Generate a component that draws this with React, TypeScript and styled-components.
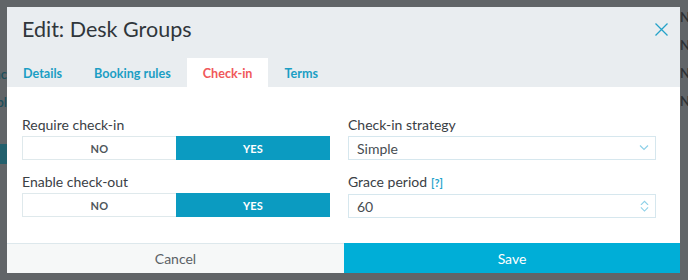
import styled, { createGlobalStyle } from "styled-components";

const GlobalStyle = createGlobalStyle`
  html, body {
    margin: 0;
    padding: 0;
    background: #616568;
  }
  body {
    font-family: Lato, "Open Sans", sans-serif;
  }
`;

const Page = styled.div`
  display: flex;
  width: 688px;
  height: 280px;
  padding: 7px 0;
  box-sizing: border-box;
  overflow: hidden;
`;

const SideStrip = styled.div<{ $width: number; $top: number }>`
  width: ${(p) => p.$width}px;
  flex: none;
  overflow: hidden;
  display: flex;
  flex-direction: column;
  padding-top: ${(p) => p.$top}px;
  gap: 11px;
`;

const BackText = styled.div<{ $color: string }>`
  font-size: 13px;
  line-height: 17px;
  font-weight: 600;
  color: ${(p) => p.$color};
  white-space: nowrap;
`;

const BackLeftText = styled(BackText)`
  direction: rtl;
`;

const BackBlock = styled.div`
  height: 20px;
  margin-top: 22px;
  background: #23606d;
`;

const Modal = styled.div`
  width: 673px;
  flex: none;
  display: flex;
  flex-direction: column;
  background: #fff;
`;

const Header = styled.div`
  background: #e9edf0;
  display: flex;
  flex-direction: column;
`;

const TitleRow = styled.div`
  display: flex;
  justify-content: space-between;
  align-items: flex-start;
  height: 51px;
  padding: 9px 12px 0 15px;
  box-sizing: border-box;
`;

const Title = styled.h2`
  margin: 0;
  font-size: 21.5px;
  line-height: 26px;
  font-weight: 400;
  color: #30363b;
`;

const CloseButton = styled.button`
  border: 0;
  background: none;
  padding: 0;
  margin-top: 7px;
  width: 13px;
  height: 13px;
  display: flex;
  cursor: pointer;
`;

const Tabs = styled.div`
  display: flex;
  height: 29px;
`;

const Tab = styled.div<{ $active?: boolean }>`
  padding: 1px 16px 0;
  display: flex;
  align-items: center;
  font-size: 12.6px;
  font-weight: 700;
  color: ${(p) => (p.$active ? "#f0585a" : "#1b9ec4")};
  background: ${(p) => (p.$active ? "#fff" : "transparent")};
`;

const Body = styled.div`
  flex: 1;
  display: grid;
  grid-template-columns: 308px 308px;
  column-gap: 18px;
  padding: 29px 24px 0 15px;
  align-content: start;
`;

const Column = styled.div`
  display: flex;
  flex-direction: column;
  gap: 13px;
`;

const Field = styled.div`
  display: flex;
  flex-direction: column;
  gap: 3px;
`;

const Label = styled.label`
  font-size: 14px;
  line-height: 17px;
  color: #3a4045;
  display: flex;
  align-items: baseline;
  gap: 4px;
`;

const Help = styled.span`
  font-size: 11px;
  font-weight: 700;
  color: #1ea3cb;
`;

const Toggle = styled.div`
  display: grid;
  grid-template-columns: 1fr 1fr;
  height: 24px;
  border: 1px solid #dfe9ec;
  box-sizing: border-box;
`;

const ToggleOption = styled.div<{ $on?: boolean }>`
  display: flex;
  align-items: center;
  justify-content: center;
  font-size: 11px;
  font-weight: 700;
  letter-spacing: 0.2px;
  color: ${(p) => (p.$on ? "#fff" : "#4f565b")};
  background: ${(p) => (p.$on ? "#0b9bc1" : "#fff")};
  margin: ${(p) => (p.$on ? "-1px -1px -1px 0" : "0")};
`;

const InputBox = styled.div`
  display: flex;
  align-items: center;
  justify-content: space-between;
  height: 24px;
  border: 1px solid #d6e7ee;
  box-sizing: border-box;
  padding: 0 6px 0 8px;
  font-size: 14px;
  color: #474d52;
`;

const Spinner = styled.div`
  display: flex;
  flex-direction: column;
  gap: 2px;
`;

const Footer = styled.div`
  display: grid;
  grid-template-columns: 337px 336px;
  height: 29px;
  border-top: 1px solid #dde8ec;
`;

const FooterButton = styled.button<{ $primary?: boolean }>`
  border: 0;
  margin: 0;
  font-family: inherit;
  font-size: 14px;
  cursor: pointer;
  color: ${(p) => (p.$primary ? "#fff" : "#5b6166")};
  background: ${(p) => (p.$primary ? "#00aed7" : "#f6f8f8")};
  margin-top: ${(p) => (p.$primary ? "-1px" : "0")};
`;

const Chevron = ({ up, size = 10 }: { up?: boolean; size?: number }) => (
  <svg width={size} height={size * 0.6} viewBox="0 0 10 6">
    <path
      d={up ? "M1 5.5 L5 1.5 L9 5.5" : "M1 0.5 L5 4.5 L9 0.5"}
      fill="none"
      stroke="#8dd0e8"
      strokeWidth="1.2"
    />
  </svg>
);

const ToggleField = ({ label }: { label: string }) => (
  <Field>
    <Label>{label}</Label>
    <Toggle>
      <ToggleOption>NO</ToggleOption>
      <ToggleOption $on>YES</ToggleOption>
    </Toggle>
  </Field>
);

export default function App() {
  return (
    <>
      <GlobalStyle />
      <Page>
        <SideStrip $width={7} $top={59}>
          <BackLeftText $color="#1c4f5c">Sync</BackLeftText>
          <BackLeftText $color="#1c4f5c">Enabl</BackLeftText>
          <BackBlock />
        </SideStrip>
        <Modal>
          <Header>
            <TitleRow>
              <Title>Edit: Desk Groups</Title>
              <CloseButton aria-label="Close">
                <svg width="13" height="13" viewBox="0 0 13 13">
                  <path
                    d="M0.5 0.5 L12.5 12.5 M12.5 0.5 L0.5 12.5"
                    stroke="#24a2c9"
                    strokeWidth="1.3"
                  />
                </svg>
              </CloseButton>
            </TitleRow>
            <Tabs>
              <Tab>Details</Tab>
              <Tab>Booking rules</Tab>
              <Tab $active>Check-in</Tab>
              <Tab>Terms</Tab>
            </Tabs>
          </Header>
          <Body>
            <Column>
              <ToggleField label="Require check-in" />
              <ToggleField label="Enable check-out" />
            </Column>
            <Column>
              <Field>
                <Label>Check-in strategy</Label>
                <InputBox>
                  Simple
                  <Chevron />
                </InputBox>
              </Field>
              <Field>
                <Label>
                  Grace period <Help>[?]</Help>
                </Label>
                <InputBox>
                  60
                  <Spinner>
                    <Chevron up size={9} />
                    <Chevron size={9} />
                  </Spinner>
                </InputBox>
              </Field>
            </Column>
          </Body>
          <Footer>
            <FooterButton>Cancel</FooterButton>
            <FooterButton $primary>Save</FooterButton>
          </Footer>
        </Modal>
        <SideStrip $width={8} $top={2}>
          <BackText $color="#2c3033">N</BackText>
          <BackText $color="#2c3033">N</BackText>
          <BackText $color="#2c3033">N</BackText>
          <BackText $color="#2c3033">N</BackText>
        </SideStrip>
      </Page>
    </>
  );
}
